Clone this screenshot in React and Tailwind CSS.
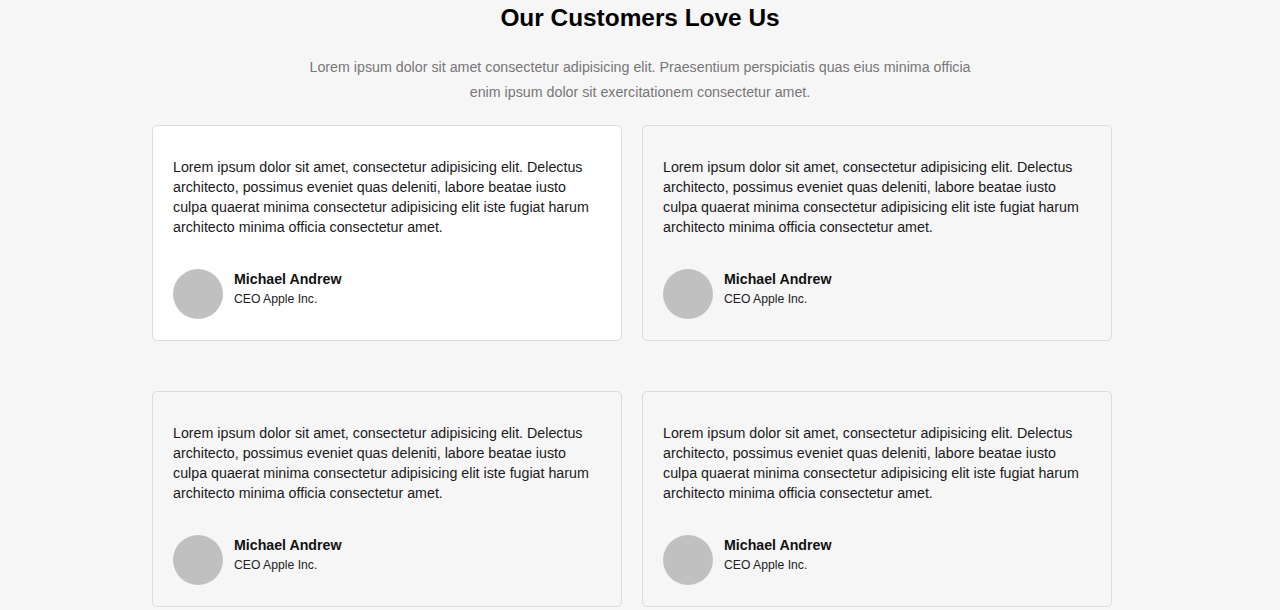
const quote =
  'Lorem ipsum dolor sit amet, consectetur adipisicing elit. Delectus architecto, possimus eveniet quas deleniti, labore beatae iusto culpa quaerat minima consectetur adipisicing elit iste fugiat harum architecto minima officia consectetur amet.'

function TestimonialCard({ highlighted }) {
  return (
    <div
      className={`rounded-[5px] border border-[#dcdcdc] pl-[20px] pr-[30px] pt-[31px] pb-[21px] ${
        highlighted ? 'bg-white' : 'bg-[#f6f6f6]'
      }`}
    >
      <p className="text-[14.25px] leading-[20px] text-[#1a1a1a]">{quote}</p>
      <div className="mt-[32px] flex items-center gap-[11px]">
        <div className="h-[50px] w-[50px] shrink-0 rounded-full bg-[#c0c0c0]" />
        <div className="-mt-[11px]">
          <h4 className="text-[14.2px] font-bold leading-[20px] text-[#111]">Michael Andrew</h4>
          <p className="text-[12.2px] leading-[20px] text-[#222]">CEO Apple Inc.</p>
        </div>
      </div>
    </div>
  )
}

export default function App() {
  return (
    <div className="min-h-[610px] bg-[#f6f6f6] font-['Liberation_Sans',Arial,sans-serif]">
      <section className="pt-[4px]">
        <h2 className="text-center text-[24.4px] font-bold leading-[28px] text-black">
          Our Customers Love Us
        </h2>
        <p className="mx-auto mt-[23px] max-w-[680px] text-center text-[14.25px] leading-[25px] text-[#777]">
          Lorem ipsum dolor sit amet consectetur adipisicing elit. Praesentium perspiciatis quas eius minima officia
          enim ipsum dolor sit exercitationem consectetur amet.
        </p>
        <div className="ml-[152px] mt-[20px] grid w-[960px] grid-cols-2 gap-x-[20px] gap-y-[50px]">
          <TestimonialCard highlighted />
          <TestimonialCard />
          <TestimonialCard />
          <TestimonialCard />
        </div>
      </section>
    </div>
  )
}
